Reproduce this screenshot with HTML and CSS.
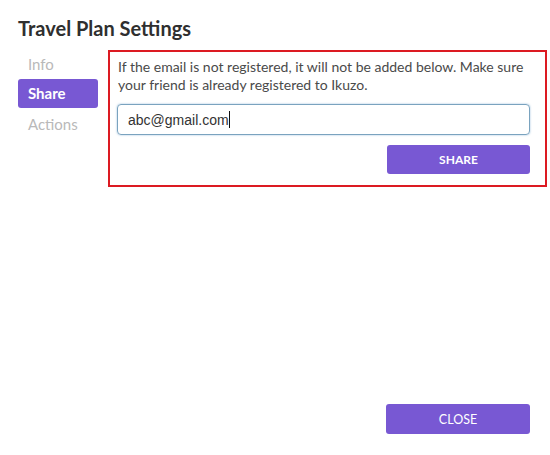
FILE: index.html
```html
<!DOCTYPE html>
<html>
<head>
<meta charset="utf-8">
<link rel="stylesheet" href="styles.css">
</head>
<body>
<div class="dialog">
  <h1 class="title">Travel Plan Settings</h1>
  <div class="content">
    <nav class="sidebar">
      <div class="tab">Info</div>
      <div class="tab active">Share</div>
      <div class="tab">Actions</div>
    </nav>
    <section class="panel">
      <p class="note">If the email is not registered, it will not be added below. Make sure your friend is already registered to Ikuzo.</p>
      <div class="field"><span class="value">abc@gmail.com</span><span class="caret"></span></div>
      <div class="actions"><button class="btn share">SHARE</button></div>
    </section>
  </div>
  <div class="footer"><button class="btn close">CLOSE</button></div>
</div>
</body>
</html>
```
FILE: styles.css
```css
html, body {
  margin: 0;
  padding: 0;
  background: #fff;
}
.dialog {
  height: 455px;
  display: flex;
  flex-direction: column;
  font-family: Lato, "Liberation Sans", sans-serif;
  box-sizing: border-box;
}
.title {
  margin: 0;
  padding: 16px 18px 0;
  font-size: 20px;
  line-height: 24px;
  font-weight: 700;
  color: #2f2f2f;
}
.content {
  display: flex;
  gap: 10px;
  padding: 10px 3px 0 18px;
  flex: 1;
  align-items: flex-start;
}
.sidebar {
  width: 80px;
  display: flex;
  flex-direction: column;
  margin-top: -1px;
}
.tab {
  height: 30px;
  line-height: 30px;
  padding-left: 10px;
  font-size: 15px;
  color: #b9b9b9;
  border-radius: 3px;
}
.tab.active {
  background: #7858d3;
  color: #fff;
  font-weight: 700;
  height: 29px;
  line-height: 29px;
  margin-bottom: 1px;
}
.panel {
  flex: 1;
  border: 2px solid #dc1a22;
  padding: 6px 15px 11px 7px;
  display: flex;
  flex-direction: column;
}
.note {
  margin: 0 0 10px 1px;
  font-size: 14px;
  line-height: 18px;
  color: #4a4a4a;
}
.field {
  height: 31px;
  box-sizing: border-box;
  border: 1px solid #7aa3bf;
  border-radius: 4px;
  box-shadow: 0 0 2px rgba(100, 155, 200, 0.7);
  padding-left: 10px;
  display: flex;
  align-items: center;
  font-family: "Liberation Sans", Arial, sans-serif;
  font-size: 14px;
  color: #333;
}
.caret {
  width: 1px;
  height: 17px;
  background: #111;
}
.actions {
  display: flex;
  justify-content: flex-end;
  margin-top: 10px;
  padding-right: 0;
}
.btn {
  border: none;
  background: #7858d3;
  color: #fff;
  font-family: Lato, "Liberation Sans", sans-serif;
  font-size: 12px;
  border-radius: 3px;
  width: 143px;
  height: 29px;
  padding: 0;
}
.share {
  font-weight: 700;
}
.footer {
  display: flex;
  justify-content: flex-end;
  padding: 0 20px 21px 0;
}
.close {
  width: 144px;
  height: 30px;
  font-size: 12.5px;
}
```
